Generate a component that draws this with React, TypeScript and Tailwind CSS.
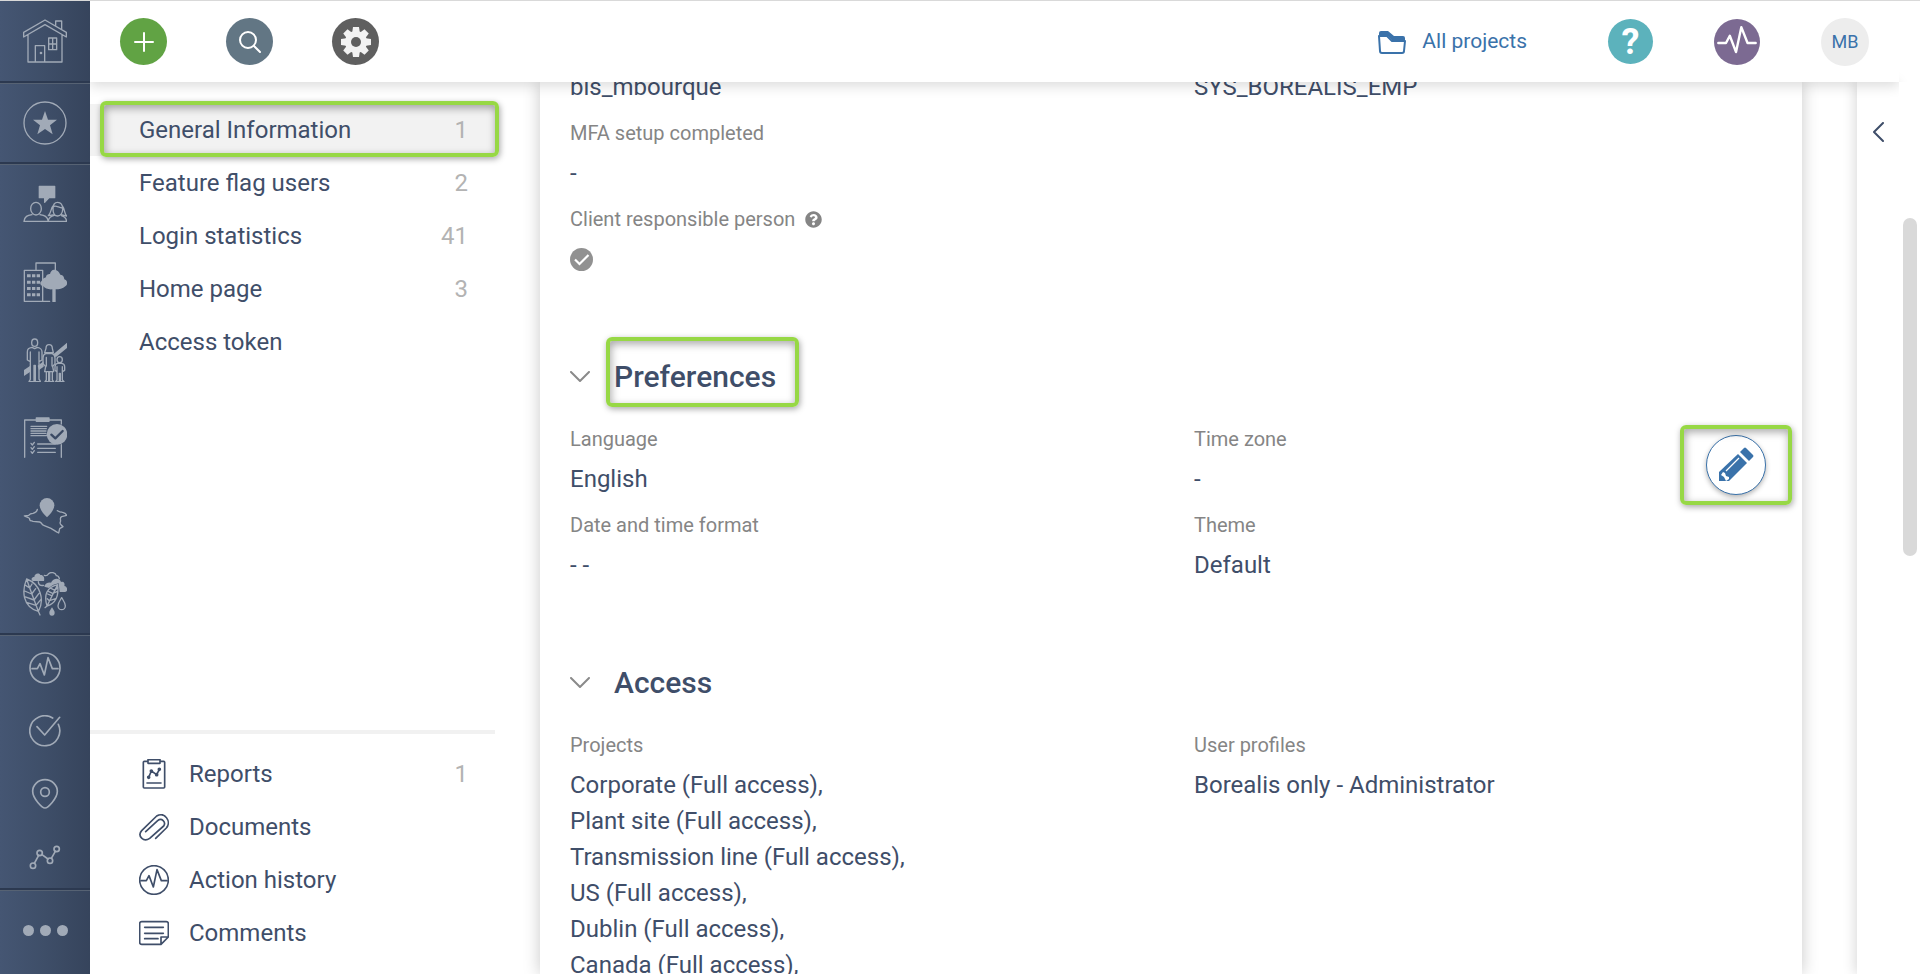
import type { ReactNode } from 'react'
import { FaQuestionCircle } from 'react-icons/fa'

interface NavItem {
  label: string
  count?: number
  active?: boolean
  icon?: ReactNode
}

interface FieldData {
  label: string
  lines?: string[]
  help?: boolean
  checked?: boolean
}

function Icon({ box, className, children, width = 4 }: {
  box: string; className: string; children: ReactNode; width?: number
}) {
  return (
    <svg viewBox={box} className={className} fill="none" stroke="currentColor" strokeWidth={width}
      strokeLinejoin="round" strokeLinecap="round" aria-hidden="true">
      {children}
    </svg>
  )
}

function PulsePath() {
  return <path d="M9 50H25L33 35L46 69L57 17L70 50H87" />
}

const MAIN_ICONS: Array<{ label: string; art: ReactNode }> = [
  {
    label: 'Stakeholders',
    art: (
      <>
        <path d="M49 13H95V47H78L65 61V47H49Z" fill="currentColor" />
        <ellipse cx="39" cy="80" rx="16" ry="19" />
        <path d="M3 118C5 103 13 100 27 98M51 98C65 100 73 103 76 118M3 118H131C129 106 124 103 115 101M76 116C78 105 84 102 94 100" />
        <path d="M90 80C90 66 96 61 104 61S119 66 119 82C119 94 112 102 104 102S90 94 90 80ZM91 74C98 68 108 78 118 78M90 72C83 80 85 92 76 101L90 99M118 72C126 82 123 93 131 102L117 99" />
      </>
    )
  },
  {
    label: 'Land and sites',
    art: (
      <>
        <path d="M39 30V9H97V36M80 124H4V31H59V124" />
        <path d="M12 43h11v9H12zM27 43h10v9H27zM41 43h10v9H41zM12 62h11v9H12zM27 62h10v9H27zM41 62h10v9H41zM12 81h11v9H12zM27 81h10v9H27zM41 81h10v9H41zM12 100h11v9H12zM27 100h10v9H27zM41 100h10v9H41z" fill="currentColor" stroke="none" />
        <path d="M93 29C104 29 108 36 112 44C121 45 123 51 124 58C134 61 135 73 128 78C119 87 108 88 98 88V126H88V88C75 89 66 85 61 79C51 77 49 67 56 63C58 56 64 54 69 52C69 44 76 42 81 42C83 34 87 29 93 29Z" fill="currentColor" stroke="none" />
      </>
    )
  },
  {
    label: 'Households',
    art: (
      <>
        <path d="M3 96L22 83V101L3 114ZM44 83L62 70V86L48 96ZM92 48L132 14V30L98 58Z" fill="currentColor" stroke="none" />
        <ellipse cx="35" cy="14" rx="9" ry="11" />
        <path d="M27 28C17 30 13 32 13 42V66L22 71V124C20 128 18 130 18 131H33V82H37V131H52C52 128 50 126 48 124V71L57 66V42C57 32 52 30 43 28L35 32ZM22 42V71M48 42V71" />
        <path d="M69 31C69 23 73 20 78 20S88 23 88 31L91 44H65ZM68 47C62 49 60 53 60 60V77L68 86L65 101H92L89 86L96 77V60C96 53 93 49 88 47ZM70 101V126L66 131H77V101M80 101V131H92L88 126V101M70 58V84M87 58V84" />
        <ellipse cx="110" cy="65" rx="8" ry="9" />
        <path d="M104 76C98 77 96 80 96 86V97L102 101V126L98 131H109V106H112V131H123L118 126V101L125 97V86C125 80 122 77 116 76ZM102 86V101M118 86V101" />
      </>
    )
  },
  {
    label: 'Commitments',
    art: (
      <>
        <path d="M5 124V12H115V24M115 86V124" />
        <path d="M40 6H78V16H40Z" fill="currentColor" />
        <path d="M24 31H71M24 38H70M24 45H69M24 52H69M24 59H71M44 84H97M44 97H97M44 109H97M24 82L28 87L34 79M24 95L28 100L34 92M24 107L28 112L34 104" />
        <circle cx="102" cy="55" r="31" fill="currentColor" stroke="none" />
        <path d="M85 56L97 67L119 45" stroke="#3b4a64" strokeWidth="7" />
      </>
    )
  },
  {
    label: 'Map',
    art: (
      <>
        <path d="M72 70C60 58 50 46 50 34A22 22 0 0 1 94 34C94 46 84 58 72 70Z" fill="currentColor" stroke="none" />
        <path d="M43 46C42 54 36 56 30 58C22 58 20 60 17 64L4 66C14 70 22 72 20 77C22 82 26 80 30 82L50 84C58 86 54 92 62 94L84 103C90 106 98 113 107 117L110 104L120 98C116 92 108 92 112 84C115 78 108 72 116 68L131 64C128 56 120 56 115 54C110 55 106 52 103 50" />
      </>
    )
  },
  {
    label: 'Environment',
    art: (
      <>
        <path d="M11 21C-4 56 -2 104 46 118C66 84 52 36 11 21ZM11 21C20 50 34 84 46 118L51 129M8 40L20 48L27 36M5 57L26 66L38 50M5 74L33 84L48 64M13 92L39 100L54 82" />
        <path d="M29 27C23 22 26 15 34 15C34 4 48 1 52 9C60 8 66 16 63 27Z" fill="currentColor" stroke="none" />
        <path d="M46 29C46 38 52 42 62 40M64 10C70 12 74 10 76 6C84-2 98 2 100 11C106 11 108 15 109 20" />
        <path d="M64 44C66 34 76 30 84 32C90 18 110 16 114 30C124 26 126 36 124 42C134 44 136 58 126 60H110L107 34C96 36 86 40 78 48Z" fill="currentColor" stroke="none" />
        <path d="M104 38C70 46 62 70 72 102C100 94 108 72 104 38ZM104 38L72 102L66 107M74 66L84 70M73 80L79 86L98 80M76 58L89 64L104 58M84 49L96 55L105 46" />
        <path d="M116 77C110 87 105 93 105 101A11 12 0 0 0 127 101C127 93 122 87 116 77Z" />
        <path d="M87 106C83 113 79 117 79 122A8 9 0 0 0 95 122C95 117 91 113 87 106Z" fill="currentColor" stroke="none" />
      </>
    )
  }
]

const TOOL_ICONS: Array<{ label: string; art: ReactNode }> = [
  { label: 'Activity', art: <><circle cx="48" cy="48" r="45" /><PulsePath /></> },
  { label: 'Tasks', art: <path d="M71 9A45 45 0 1 0 88 28M24 35L47 60L92 7" /> },
  {
    label: 'Locations',
    art: <><path d="M48 90C40 90 11 62 11 40A37 35 0 0 1 85 40C85 62 56 90 48 90Z" /><circle cx="48" cy="42" r="13" /></>
  },
  {
    label: 'Trends',
    art: (
      <>
        <path d="M16 67L29 43M39 41L57 54M67 52L79 31" />
        <circle cx="12" cy="74" r="8" /><circle cx="32" cy="36" r="8" />
        <circle cx="63" cy="59" r="8" /><circle cx="83" cy="24" r="8" />
      </>
    )
  }
]

const SECTIONS_NAV: NavItem[] = [
  { label: 'General Information', count: 1, active: true },
  { label: 'Feature flag users', count: 2 },
  { label: 'Login statistics', count: 41 },
  { label: 'Home page', count: 3 },
  { label: 'Access token' }
]

const RELATED_NAV: NavItem[] = [
  {
    label: 'Reports',
    count: 1,
    icon: (
      <>
        <path d="M27 7H16Q13 7 13 10V84Q13 87 16 87H74Q77 87 77 84V10Q77 7 74 7H63M27 2H63V13H27ZM24 72H66" />
        <path d="M29 55L37 36L53 47L61 31" />
        <circle cx="29" cy="55" r="3" /><circle cx="37" cy="36" r="3" />
        <circle cx="53" cy="47" r="3" /><circle cx="61" cy="31" r="3" />
      </>
    )
  },
  {
    label: 'Documents',
    icon: <path d="M50 79L82 48C98 30 78-3 53 12L8 56C-6 72 14 92 32 79L74 42C82 30 68 16 56 26L20 59" />
  },
  { label: 'Action history', icon: <g transform="translate(-3 -3)"><circle cx="48" cy="48" r="43" /><PulsePath /></g> },
  {
    label: 'Comments',
    icon: <path d="M66 79H8Q2 79 2 73V17Q2 11 8 11H82Q88 11 88 17V57L66 79V57H88M17 28H73M17 46H73M17 62H57" />
  }
]

const ACCOUNT_LEFT: FieldData[] = [
  { label: 'MFA setup completed', lines: ['-'] },
  { label: 'Client responsible person', help: true, checked: true }
]

const PREFERENCES: FieldData[] = [
  { label: 'Language', lines: ['English'] },
  { label: 'Time zone', lines: ['-'] },
  { label: 'Date and time format', lines: ['- -'] },
  { label: 'Theme', lines: ['Default'] }
]

const ACCESS: FieldData[] = [
  {
    label: 'Projects',
    lines: [
      'Corporate (Full access),',
      'Plant site (Full access),',
      'Transmission line (Full access),',
      'US (Full access),',
      'Dublin (Full access),',
      'Canada (Full access),'
    ]
  },
  { label: 'User profiles', lines: ['Borealis only - Administrator'] }
]

// Green frame laid over the item it points at
function Highlight({ className }: { className: string }) {
  return (
    <span className={`pointer-events-none absolute rounded-md border-4 border-[#97d845] shadow-[1px_2px_6px_rgba(0,0,0,0.35),inset_1px_3px_8px_rgba(0,0,0,0.35)] ${className}`} />
  )
}

function Rule() {
  return <div className="h-[3px] shrink-0 border-b border-[#566273] bg-[#2c3950]" />
}

function Sidebar() {
  return (
    <nav aria-label="Modules" className="flex w-[90px] shrink-0 flex-col bg-linear-to-r from-[#455673] via-[#3e4e68] to-[#36445c] text-[#a1aab7]">
      <button aria-label="Home" className="flex h-20 shrink-0 items-center justify-center">
        <Icon box="0 0 132 132" className="size-11">
          <path d="M66 3L2 40V54L66 17L130 54V40ZM98 20V6H116V31M15 49V129H117V49M37 129V80H65V129M77 57H101V92H77ZM89 57V92M77 75H101" />
          <circle cx="54" cy="102" r="2" />
        </Icon>
      </button>
      <Rule />
      <button aria-label="Favorites" className="flex h-[78px] shrink-0 items-center justify-center">
        <Icon box="0 0 132 132" className="size-11">
          <circle cx="66" cy="66" r="63" />
          <path d="M66 30L75 56H102L81 73L89 100L66 84L43 100L51 73L30 56H57Z" fill="currentColor" stroke="none" />
        </Icon>
      </button>
      <Rule />
      {MAIN_ICONS.map(item => (
        <button key={item.label} aria-label={item.label} className="flex h-[78px] shrink-0 items-center justify-center">
          <Icon box="0 0 132 132" className="size-11" width={4}>{item.art}</Icon>
        </button>
      ))}
      <Rule />
      {TOOL_ICONS.map(item => (
        <button key={item.label} aria-label={item.label} className="flex h-[63px] shrink-0 items-center justify-center">
          <Icon box="0 0 96 96" className="size-8" width={5}>{item.art}</Icon>
        </button>
      ))}
      <Rule />
      <button aria-label="More" className="flex flex-1 items-center justify-center gap-[6px] pb-1">
        {[1, 2, 3].map(i => <span key={i} className="size-[11px] rounded-full bg-current" />)}
      </button>
    </nav>
  )
}

function Topbar() {
  return (
    <header className="relative z-10 mr-[21px] flex h-[81px] shrink-0 items-center justify-between bg-white px-[30px] shadow-[0_4px_12px_rgba(0,0,0,0.14)] [clip-path:inset(0_0_-20px_0)]">
      <div className="flex items-center gap-[59px]">
        <button aria-label="Add" className="flex size-[47px] items-center justify-center rounded-full bg-[#61a344] text-white">
          <Icon box="0 0 20 20" className="size-5" width={2}><path d="M10 1V19M1 10H19" /></Icon>
        </button>
        <button aria-label="Search" className="flex size-[47px] items-center justify-center rounded-full bg-[#627684] text-white">
          <Icon box="0 0 22 22" className="size-[22px]" width={2}>
            <circle cx="9" cy="9" r="8" /><path d="M15 15L21 21" />
          </Icon>
        </button>
        <button aria-label="Settings" className="flex size-[47px] items-center justify-center rounded-full bg-[#5f5f5f] text-[#f2f2f2]">
          <svg viewBox="-15 -15 30 30" className="size-[30px]" fill="currentColor" aria-hidden="true">
            {[0, 45, 90, 135].map(a => (
              <path key={a} d="M-3-15H3L4-8V8L3 15H-3L-4 8V-8Z" transform={`rotate(${a})`} />
            ))}
            <circle r="11" />
            <circle r="5" fill="#5f5f5f" />
          </svg>
        </button>
      </div>
      <div className="flex items-center gap-[61px] text-[#3a72aa]">
        <a href="#projects" className="mr-5 flex items-center gap-4 text-[21px]">
          <svg viewBox="0 0 28 24" className="h-6 w-7" aria-hidden="true">
            <path d="M1 6V3Q1 1 3 1H10L16 6H25Q27 6 27 8V11H15L10 6Z" fill="currentColor" />
            <path d="M1 6H9L14 11H27L26 21Q26 23 24 23H4Q2 23 2 21Z" fill="none" stroke="currentColor" strokeWidth="2" strokeLinejoin="round" />
          </svg>
          All projects
        </a>
        <button className="flex size-[45px] items-center justify-center rounded-full bg-[#5cb2bc] text-4xl font-bold text-white">?</button>
        <button aria-label="Activity" className="flex size-[46px] items-center justify-center rounded-full bg-[#7c6a92] text-white">
          <Icon box="0 0 96 96" className="size-[46px]" width={5}><PulsePath /></Icon>
        </button>
        <button className="flex size-12 items-center justify-center rounded-full bg-[#ededed] text-lg">MB</button>
      </div>
    </header>
  )
}

function NavRow({ item }: { item: NavItem }) {
  return (
    <li className="relative mb-px">
      <a href={`#${item.label.toLowerCase().replaceAll(' ', '-')}`}
        className={`flex h-[52px] items-center pr-[27px] pl-[49px] text-2xl ${item.active ? 'bg-[#f2f2f2]' : ''}`}>
        {item.icon && <Icon box="0 0 90 90" className="mr-5 size-[30px]" width={5}>{item.icon}</Icon>}
        <span className="flex-1">{item.label}</span>
        {item.count !== undefined && <span className="text-[#b3b3b3]">{item.count}</span>}
      </a>
      {item.active && <Highlight className="-top-[3px] -right-1 -bottom-px left-[10px]" />}
    </li>
  )
}

function Field({ field }: { field: FieldData }) {
  return (
    <div>
      <dt className="mb-2 flex h-7 items-center gap-[10px] text-xl text-[#858585]">
        {field.label}
        {field.help && <FaQuestionCircle size={17} />}
      </dt>
      {field.lines?.map(line => <dd key={line} className="text-2xl leading-9">{line}</dd>)}
      {field.checked && (
        <dd className="flex h-9 items-center">
          <svg viewBox="0 0 23 23" className="size-[23px]" role="img" aria-label="Yes">
            <circle cx="11.5" cy="11.5" r="11.5" fill="#919191" />
            <path d="M5 11.5L9.5 16L18.5 7" fill="none" stroke="#fff" strokeWidth="2.2" />
          </svg>
        </dd>
      )}
    </div>
  )
}

function Section({ title, highlighted, children }: { title: string; highlighted?: boolean; children: ReactNode }) {
  return (
    <section className="mt-20">
      <h2 className="mb-7 flex h-10 items-center gap-6 text-3xl font-medium">
        <Icon box="0 0 20 12" className="h-3 w-5 text-[#8a8a8a]" width={2}><path d="M1 1L10 10L19 1" /></Icon>
        <span className="relative">
          {title}
          {highlighted && <Highlight className="-top-[22px] -right-[23px] -bottom-3 -left-2" />}
        </span>
      </h2>
      {children}
    </section>
  )
}

export default function App() {
  return (
    <div className="flex h-screen overflow-hidden border-t border-[#d9d9d9] bg-white font-[Roboto,sans-serif] text-[#3f4e69]">
      <Sidebar />
      <div className="flex min-w-0 flex-1 flex-col">
        <Topbar />
        <div className="flex min-h-0 flex-1">
          <aside className="flex w-[450px] shrink-0 flex-col pr-[45px]">
            <ul className="flex-1 pt-[22px]">
              {SECTIONS_NAV.map(item => <NavRow key={item.label} item={item} />)}
            </ul>
            <ul className="border-t-4 border-[#f1f1f1] py-[14px]">
              {RELATED_NAV.map(item => <NavRow key={item.label} item={item} />)}
            </ul>
          </aside>

          <main className="min-w-0 flex-1 overflow-hidden px-[30px] shadow-[0_0_16px_rgba(0,0,0,0.22)]">
            <div className="-mt-[13px] grid grid-cols-2 gap-x-[46px] text-2xl leading-9">
              <p>bis_mbourque</p>
              <p>SYS_BOREALIS_EMP</p>
            </div>
            <dl className="mt-[14px] grid gap-[14px]">
              {ACCOUNT_LEFT.map(f => <Field key={f.label} field={f} />)}
            </dl>

            <Section title="Preferences" highlighted>
              <div className="relative">
                <dl className="grid grid-cols-2 gap-x-[46px] gap-y-[14px]">
                  {PREFERENCES.map(f => <Field key={f.label} field={f} />)}
                </dl>
                <div className="absolute top-0 -right-5 flex h-20 w-[112px] items-center justify-center">
                  <button aria-label="Edit preferences" className="flex size-[60px] items-center justify-center rounded-full border border-[#3a72aa] bg-white text-[#3a72aa] shadow-[0_2px_5px_rgba(0,0,0,0.3)]">
                    <svg viewBox="0 0 36 36" className="size-9" fill="currentColor" aria-hidden="true">
                      <path d="M22 5L31 14L35 10Q36 9 35 8L28 1Q27 0 26 1Z" />
                      <path d="M20 7L29 16L11 34H1V25Z" />
                      <path d="M3 28L5 25L7 26L8 29L11 30V32L8 34L6 30Z" fill="#fff" />
                      <path d="M8 24L21 11" stroke="#fff" strokeWidth="1.2" />
                    </svg>
                  </button>
                  <Highlight className="inset-0" />
                </div>
              </div>
            </Section>

            <Section title="Access">
              <dl className="grid grid-cols-2 gap-x-[46px]">
                {ACCESS.map(f => <Field key={f.label} field={f} />)}
              </dl>
            </Section>
          </main>

          <aside className="ml-[55px] flex w-[42px] shrink-0 justify-center pt-10 shadow-[-2px_0_12px_rgba(0,0,0,0.15)]">
            <button aria-label="Expand panel" className="h-5 w-[11px]">
              <Icon box="0 0 11 20" className="h-5 w-[11px]" width={2}><path d="M10 1L1 10L10 19" /></Icon>
            </button>
          </aside>
          <div className="w-[21px] shrink-0 bg-white pt-[136px] pl-1">
            <div className="h-[338px] w-[14px] rounded-full bg-[#d9d9d9]" />
          </div>
        </div>
      </div>
    </div>
  )
}
